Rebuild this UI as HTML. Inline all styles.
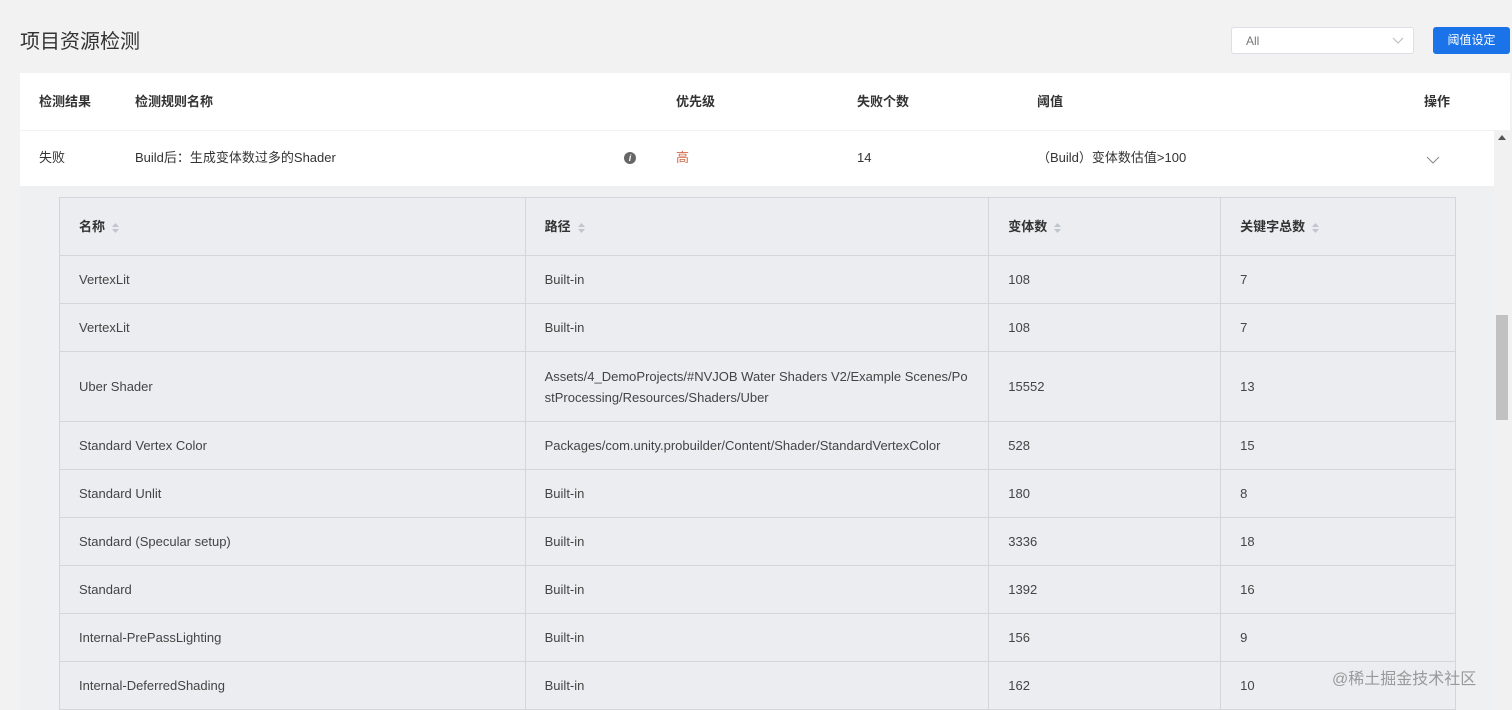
<!DOCTYPE html>
<html><head><meta charset="utf-8"><style>
*{margin:0;padding:0;box-sizing:border-box}
body{width:1512px;height:710px;overflow:hidden;background:#f2f2f2;font-family:"Liberation Sans","Noto Sans CJK SC",sans-serif;font-size:13px;color:#333;position:relative}
.a{position:absolute;line-height:20px}
.title{left:20px;top:28px;font-size:20px;color:#333;line-height:28px}
.sel{left:1231px;top:27px;width:183px;height:27px;background:#fff;border:1px solid #dcdfe6;border-radius:3px;font-size:12px;color:#777;padding:3px 14px}
.btn{left:1433px;top:27px;width:77px;height:27px;background:#1a73e8;border-radius:3px;color:#fff;font-size:12px;text-align:center;line-height:27px}
.card{left:20px;top:73px;width:1490px;height:57px;background:#fff}
.row{left:20px;top:131px;width:1474px;height:55px;background:#fff}
.th{font-weight:bold;font-size:13px;color:#333}
.exp{left:20px;top:186px;width:1474px;height:524px;background:#eef0f2}
.sb{left:1494px;top:130px;width:18px;height:580px;background:#f1f1f1}
.thumb{left:1496px;top:315px;width:12px;height:105px;background:#c1c1c1}
table{position:absolute;left:59px;top:197px;border-collapse:collapse;width:1397px;background:#ebedf0}
td{border:1px solid #d4d6da;padding:0 19px;font-size:13px;color:#444;line-height:21px;word-break:break-all}
tr.h td{height:58px;font-weight:bold;color:#333}
.s{display:inline-block;vertical-align:middle;margin-left:6px}
</style></head><body>
<div class="a title">项目资源检测</div>
<div class="a sel">All<svg class="a" style="left:160px;top:9px" width="12" height="8"><path d="M1 1l5 5 5-5" stroke="#bbb" fill="none"/></svg></div>
<div class="a btn">阈值设定</div>
<div class="a card"></div>
<div class="a th" style="left:39px;top:92px">检测结果</div>
<div class="a th" style="left:135px;top:92px">检测规则名称</div>
<div class="a th" style="left:676px;top:92px">优先级</div>
<div class="a th" style="left:857px;top:92px">失败个数</div>
<div class="a th" style="left:1037px;top:92px">阈值</div>
<div class="a th" style="left:1424px;top:92px">操作</div>
<div class="a row"></div>
<div class="a" style="left:39px;top:148px">失败</div>
<div class="a" style="left:135px;top:148px">Build后：生成变体数过多的Shader</div>
<div class="a" style="left:624px;top:152px;width:12px;height:12px;border-radius:6px;background:#666;color:#fff;font-size:9px;text-align:center;line-height:12px;font-style:italic;font-weight:bold">i</div>
<div class="a" style="left:676px;top:148px;color:#d0694a">高</div>
<div class="a" style="left:857px;top:148px">14</div>
<div class="a" style="left:1037px;top:148px">（Build）变体数估值&gt;100</div>
<svg class="a" style="left:1426px;top:156px" width="14" height="9"><path d="M1 1l6 6 6-6" stroke="#888" fill="none"/></svg>
<div class="a exp"></div>
<div class="a sb"></div><div class="a thumb"></div>
<div class="a" style="left:1498px;top:135px;width:0;height:0;border:4px solid transparent;border-bottom:5px solid #555;border-top:0"></div>
<table>
<colgroup><col style="width:466px"><col style="width:464px"><col style="width:232px"><col style="width:235px"></colgroup>
<tr class="h"><td>名称<svg class="s" width="9" height="12"><path d="M1 5l3.5-4 3.5 4zM1 7l3.5 4 3.5-4z" fill="#c0c4cc"/></svg></td><td>路径<svg class="s" width="9" height="12"><path d="M1 5l3.5-4 3.5 4zM1 7l3.5 4 3.5-4z" fill="#c0c4cc"/></svg></td><td>变体数<svg class="s" width="9" height="12"><path d="M1 5l3.5-4 3.5 4zM1 7l3.5 4 3.5-4z" fill="#c0c4cc"/></svg></td><td>关键字总数<svg class="s" width="9" height="12"><path d="M1 5l3.5-4 3.5 4zM1 7l3.5 4 3.5-4z" fill="#c0c4cc"/></svg></td></tr>
<tr style="height:48px"><td>VertexLit</td><td>Built-in</td><td>108</td><td>7</td></tr>
<tr style="height:48px"><td>VertexLit</td><td>Built-in</td><td>108</td><td>7</td></tr>
<tr style="height:70px"><td>Uber Shader</td><td>Assets/4_DemoProjects/#NVJOB Water Shaders V2/Example Scenes/PostProcessing/Resources/Shaders/Uber</td><td>15552</td><td>13</td></tr>
<tr style="height:48px"><td>Standard Vertex Color</td><td>Packages/com.unity.probuilder/Content/Shader/StandardVertexColor</td><td>528</td><td>15</td></tr>
<tr style="height:48px"><td>Standard Unlit</td><td>Built-in</td><td>180</td><td>8</td></tr>
<tr style="height:48px"><td>Standard (Specular setup)</td><td>Built-in</td><td>3336</td><td>18</td></tr>
<tr style="height:48px"><td>Standard</td><td>Built-in</td><td>1392</td><td>16</td></tr>
<tr style="height:48px"><td>Internal-PrePassLighting</td><td>Built-in</td><td>156</td><td>9</td></tr>
<tr style="height:48px"><td>Internal-DeferredShading</td><td>Built-in</td><td>162</td><td>10</td></tr>
</table>
<div class="a" style="left:1332px;top:670px;font-size:16px;color:#999">@稀土掘金技术社区</div>
</body></html>
